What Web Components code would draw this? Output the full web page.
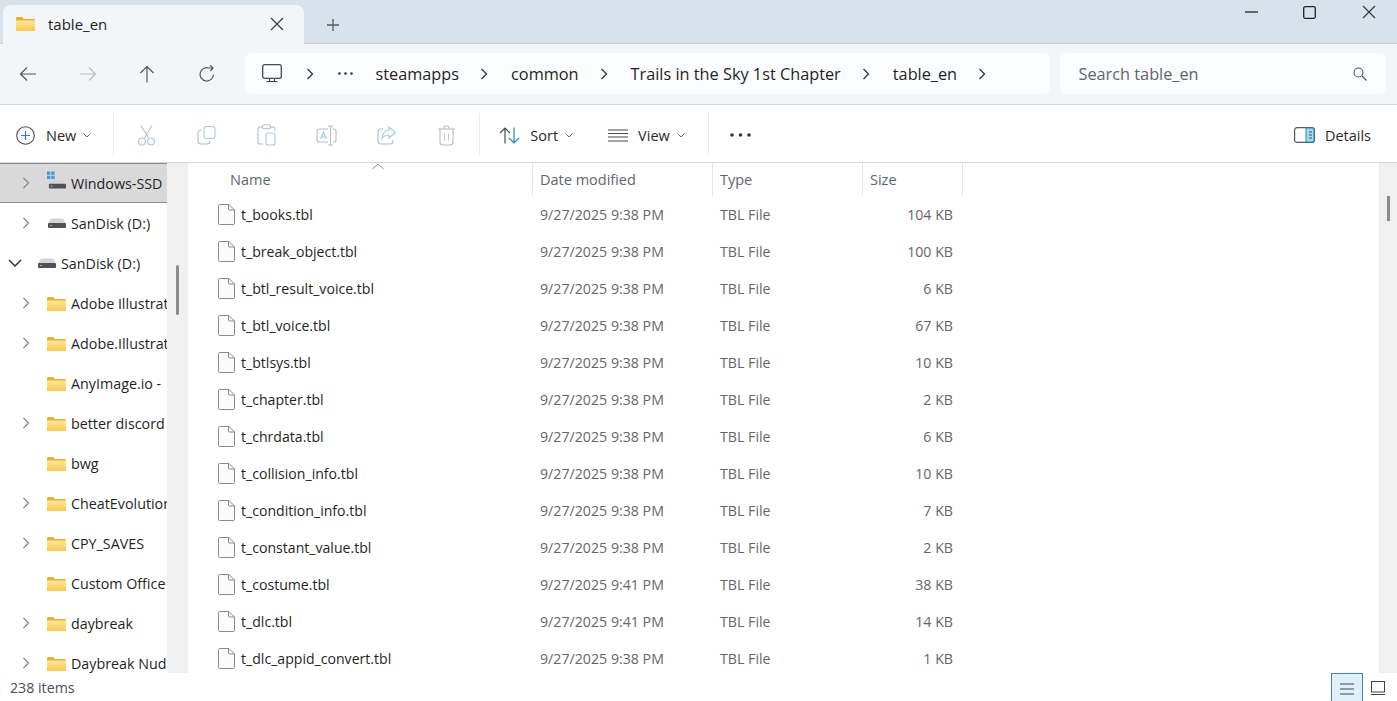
<!DOCTYPE html>
<html lang="en">
<head>
<meta charset="utf-8">
<title>table_en</title>
<style>
    html, body { margin: 0; height: 100%; overflow: hidden; background: #fff; }
    body { font-family: "Open Sans", "Noto Sans", "Liberation Sans", sans-serif; color: #1f1f1f; }
</style>
</head>
<body>
<x-explorer></x-explorer>

<script>
const ICONS = {
    folder: `<svg width="19" height="15" viewBox="0 0 19 15"><defs><linearGradient id="f" x1="0" y1="0" x2="0" y2="1"><stop offset="0" stop-color="#ffe99c"/><stop offset="1" stop-color="#f6c850"/></linearGradient></defs><path d="M0 2a1 1 0 0 1 1-1h5l2 2h10a1 1 0 0 1 1 1v10a1 1 0 0 1-1 1H1a1 1 0 0 1-1-1z" fill="#e8b02e"/><path d="M0 4.500h19V14a1 1 0 0 1-1 1H1a1 1 0 0 1-1-1z" fill="url(#f)"/></svg>`,
    drive: `<svg width="18" height="10" viewBox="0 0 18 10"><path d="M3 0.500h12l3 5H0z" fill="#d5d5d5"/><rect y="5" width="18" height="5" rx="1" fill="#4e5156"/><rect x="2" y="7" width="2" height="1" fill="#9bc46a"/></svg>`,
    osdrive: `<svg width="20" height="19" viewBox="0 0 20 19"><g fill="#3f9bd8"><rect x="0" y="0" width="3.500" height="3.500"/><rect x="4.500" y="0" width="3.500" height="3.500"/><rect x="0" y="4.500" width="3.500" height="3.500"/><rect x="4.500" y="4.500" width="3.500" height="3.500"/></g><path d="M4 9h12l3 5H2z" fill="#d5d5d5"/><rect x="2" y="13" width="18" height="5" rx="1" fill="#4e5156"/><rect x="4" y="15" width="2" height="1" fill="#9bc46a"/></svg>`,
    file: `<svg width="17" height="21" viewBox="0 0 17 21"><path d="M1.500.500h9.500l5.500 5.500v13.500a1 1 0 0 1-1 1h-14a1 1 0 0 1-1-1V1.500a1 1 0 0 1 1-1z" fill="#fbfbfb" stroke="#8a8a8a"/><path d="M10.500.500v4.500a1 1 0 0 0 1 1h5" fill="none" stroke="#8a8a8a"/></svg>`,
    chevR: `<svg width="8" height="12" viewBox="0 0 8 12"><path d="M1.500 1l5 5-5 5" fill="none" stroke="currentColor" stroke-width="1.300"/></svg>`,
    chevD: `<svg width="14" height="8" viewBox="0 0 14 8"><path d="M1 1l6 6 6-6" fill="none" stroke="currentColor" stroke-width="1.500"/></svg>`,
    chevSmall: `<svg width="8" height="5" viewBox="0 0 8 5"><path d="M.500.500l3.500 3.500 3.500-3.500" fill="none" stroke="#6a6a6a"/></svg>`,
    caret: `<svg width="12" height="7" viewBox="0 0 12 7"><path d="M.500 6l5.500-5 5.500 5" fill="none" stroke="#8c8c8c"/></svg>`,
    close: `<svg width="14" height="14" viewBox="0 0 14 14"><path d="M1 1l12 12M13 1L1 13" fill="none" stroke="#3a3a3a" stroke-width="1.200"/></svg>`,
    plus: `<svg width="14" height="14" viewBox="0 0 14 14"><path d="M7 1v12M1 7h12" fill="none" stroke="#5a5a5a" stroke-width="1.300"/></svg>`,
    min: `<svg width="13" height="2" viewBox="0 0 13 2"><path d="M0 1h13" stroke="#222" stroke-width="1.300"/></svg>`,
    max: `<svg width="13" height="13" viewBox="0 0 13 13"><rect x=".700" y=".700" width="11.600" height="11.600" rx="1.500" fill="none" stroke="#222" stroke-width="1.300"/></svg>`,
    back: `<svg width="18" height="16" viewBox="0 0 18 16"><path d="M17 8H1.500M8 1.500L1.500 8 8 14.500" fill="none" stroke="#555" stroke-width="1.200"/></svg>`,
    forward: `<svg width="18" height="16" viewBox="0 0 18 16"><path d="M1 8h15.500M10 1.500L16.500 8 10 14.500" fill="none" stroke="#b9bdc1" stroke-width="1.200"/></svg>`,
    up: `<svg width="16" height="18" viewBox="0 0 16 18"><path d="M8 17.500V1.500M1.500 8L8 1.500 14.500 8" fill="none" stroke="#555" stroke-width="1.200"/></svg>`,
    refresh: `<svg width="16" height="17" viewBox="0 0 16 17"><path d="M14.500 9.500A6.700 6.700 0 1 1 10 3H14M11 0.500L14 3l-2.500 3" fill="none" stroke="#555" stroke-width="1.200"/></svg>`,
    pc: `<svg width="20" height="19" viewBox="0 0 20 19"><rect x=".700" y=".700" width="18.600" height="13.600" rx="2" fill="none" stroke="#4a4a4a" stroke-width="1.300"/><path d="M7.500 14.500v2.500M12.500 14.500v2.500M4.500 17.500h11" fill="none" stroke="#4a4a4a" stroke-width="1.200"/></svg>`,
    search: `<svg width="14" height="14" viewBox="0 0 14 14"><circle cx="5.500" cy="5.500" r="4.500" fill="none" stroke="#555" stroke-width="1.100"/><path d="M9 9l4.500 4.500" stroke="#555" stroke-width="1.200"/></svg>`,
    new: `<svg width="19" height="19" viewBox="0 0 19 19"><circle cx="9.500" cy="9.500" r="8.800" fill="#fff" stroke="#4a4a4a" stroke-width="1.100"/><path d="M9.500 5v9M5 9.500h9" stroke="#2a86b0" stroke-width="1.200"/></svg>`,
    cut: `<svg width="19" height="21" viewBox="0 0 19 21"><path d="M4 .500l7.500 12.500M15 .500L7.500 13" fill="none" stroke="#b6bec4" stroke-width="1.100"/><circle cx="5" cy="16.500" r="3.500" fill="none" stroke="#a9cbdd" stroke-width="1.200"/><circle cx="14" cy="16.500" r="3.500" fill="none" stroke="#a9cbdd" stroke-width="1.200"/></svg>`,
    copy: `<svg width="19" height="19" viewBox="0 0 19 19"><rect x="7" y=".500" width="11" height="12" rx="2.500" fill="#fff" stroke="#a9cbdd" stroke-width="1.100"/><path d="M5 4H4a3 3 0 0 0-3 3v8a3 3 0 0 0 3 3h6a3 3 0 0 0 3-3" fill="none" stroke="#b6bec4" stroke-width="1.100"/></svg>`,
    paste: `<svg width="19" height="22" viewBox="0 0 19 22"><path d="M5 3H3a2 2 0 0 0-2 2v13a2 2 0 0 0 2 2h3M14 3h2a2 2 0 0 1 2 2v2" fill="none" stroke="#b6bec4" stroke-width="1.100"/><rect x="5.500" y=".700" width="8" height="4" rx="1.500" fill="#fff" stroke="#b6bec4" stroke-width="1.100"/><rect x="9" y="9" width="9" height="12" rx="2" fill="#fff" stroke="#a9cbdd" stroke-width="1.100"/></svg>`,
    rename: `<svg width="21" height="21" viewBox="0 0 21 21"><path d="M12 4H3a2 2 0 0 0-2 2v9a2 2 0 0 0 2 2h9M17 4h1a2 2 0 0 1 2 2v9a2 2 0 0 1-2 2h-1" fill="none" stroke="#b6bec4" stroke-width="1.100"/><path d="M4.500 14L7.500 7l3 7M5.500 12h4" fill="none" stroke="#a9cbdd" stroke-width="1.100"/><path d="M12 1h5M12 20h5M14.500 1v19" fill="none" stroke="#b6bec4" stroke-width="1.100"/></svg>`,
    share: `<svg width="19" height="19" viewBox="0 0 19 19"><path d="M6 3H4a3 3 0 0 0-3 3v9a3 3 0 0 0 3 3h9a3 3 0 0 0 3-3v-1" fill="none" stroke="#b6bec4" stroke-width="1.100"/><path d="M12 1l6.500 5.500L12 12V9c-3 0-5 1-7 3.500C5.500 8 8 4.500 12 4z" fill="#fff" stroke="#a9cbdd" stroke-width="1.100"/></svg>`,
    trash: `<svg width="19" height="21" viewBox="0 0 19 21"><path d="M1 4h17M7 4V3a2 2 0 0 1 2-2h1a2 2 0 0 1 2 2v1M3 4v13a3 3 0 0 0 3 3h7a3 3 0 0 0 3-3V4" fill="none" stroke="#b6bec4" stroke-width="1.100"/><path d="M7.500 8.500v7M11.500 8.500v7" stroke="#c4cbd0" stroke-width="1.100"/></svg>`,
    sort: `<svg width="21" height="17" viewBox="0 0 21 17"><path d="M6 16.500V1M1 6l5-5 5 5" fill="none" stroke="#4a4a4a" stroke-width="1.200"/><path d="M15 .500V16M10 11l5 5 5-5" fill="none" stroke="#2a86b0" stroke-width="1.200"/></svg>`,
    view: `<svg width="20" height="13" viewBox="0 0 20 13"><path d="M0 1h20M0 4.500h20M0 8h20M0 12h20" stroke="#4a4a4a" stroke-width="1.100"/></svg>`,
    dots: `<svg width="21" height="4" viewBox="0 0 21 4"><circle cx="2" cy="2" r="1.800" fill="#333"/><circle cx="10.500" cy="2" r="1.800" fill="#333"/><circle cx="19" cy="2" r="1.800" fill="#333"/></svg>`,
    dotsSmall: `<svg width="15" height="3" viewBox="0 0 15 3"><circle cx="1.500" cy="1.500" r="1.300" fill="#333"/><circle cx="7.500" cy="1.500" r="1.300" fill="#333"/><circle cx="13.500" cy="1.500" r="1.300" fill="#333"/></svg>`,
    details: `<svg width="21" height="16" viewBox="0 0 21 16"><rect x=".600" y=".600" width="19.800" height="14.800" rx="2.500" fill="#fff" stroke="#4f5a63" stroke-width="1.200"/><path d="M12 1h6a2 2 0 0 1 2 2v10a2 2 0 0 1-2 2h-6z" fill="#a9d8ec" stroke="#2a86b0"/><path d="M15 5h3M15 8h3M15 11h3" stroke="#1f5f80"/></svg>`,
    listview: `<svg width="14" height="12" viewBox="0 0 14 12"><path d="M0 1h14M0 6h14M0 11h14" stroke="#444" stroke-width="1.100"/></svg>`,
    tileview: `<svg width="14" height="14" viewBox="0 0 14 14"><rect x=".500" y=".500" width="13" height="10.500" fill="#fff" stroke="#444"/><path d="M0 13.500h14" stroke="#444"/></svg>`
};

class XIcon extends HTMLElement {
    connectedCallback() {
        if (this.shadowRoot) return;
        this.attachShadow({mode: 'open'});
        this.shadowRoot.innerHTML = `
            <style>
                :host { display: inline-flex; align-items: center; justify-content: center; flex: none; }
                svg { display: block; }
            </style>
            ${ICONS[this.getAttribute('name')] || ''}
        `;
    }
}
customElements.define('x-icon', XIcon);

class TabStrip extends HTMLElement {
    constructor() {
        super();
        this.attachShadow({mode: 'open'});
        this.shadowRoot.innerHTML = `
            <style>
                :host {
                    display: flex;
                    height: 44px;
                    flex: none;
                    align-items: flex-end;
                    padding-left: 3px;
                    background: #d8e2ea;
                    box-shadow: inset 0 -1px 0 #c6d0d8;
                    font-size: 15px;
                }
                .tab {
                    width: 301px;
                    height: 39px;
                    box-sizing: border-box;
                    padding: 0 20px 2px 13px;
                    display: flex;
                    align-items: center;
                    background: #f3f6f8;
                    border-radius: 8px 8px 0 0;
                }
                .title { margin-left: 13px; flex: 1; }
                .plus { margin: 0 0 5px 22px; align-self: flex-end; height: 28px; }
                .controls { margin-left: auto; align-self: flex-start; display: flex; height: 24px; align-items: center; padding-right: 21px; }
                .controls .max { margin: 0 46px 0 45px; }
            </style>
            <div class="tab">
                <x-icon name="folder"></x-icon>
                <span class="title">table_en</span>
                <x-icon name="close"></x-icon>
            </div>
            <x-icon class="plus" name="plus"></x-icon>
            <div class="controls">
                <x-icon name="min"></x-icon>
                <x-icon class="max" name="max"></x-icon>
                <x-icon name="close"></x-icon>
            </div>
        `;
    }
}
customElements.define('x-tabstrip', TabStrip);

class NavBar extends HTMLElement {
    constructor() {
        super();
        this.attachShadow({mode: 'open'});
        const crumbs = ['steamapps', 'common', 'Trails in the Sky 1st Chapter', 'table_en'];
        this.shadowRoot.innerHTML = `
            <style>
                :host {
                    display: flex;
                    flex: none;
                    height: 61px;
                    box-sizing: border-box;
                    align-items: center;
                    padding: 0 11px 1px 18px;
                    background: #f2f6f8;
                    border-bottom: 1px solid #d0d6db;
                    font-size: 16.300px;
                }
                .nav { display: flex; gap: 39.500px; align-items: center; margin-right: 28px; }
                .nav x-icon { width: 20px; }
                .address, .search { height: 41px; display: flex; align-items: center; box-sizing: border-box; border-radius: 6px; }
                .address { width: 805px; background: #fbfcfd; padding-left: 17px; }
                .search { width: 326px; margin-left: 10px; background: #fafcfd; padding: 0 19px; justify-content: space-between; color: #606468; }
                .pc { margin-right: 24px; }
                .sep { color: #333; margin: 0 23px 0 21px; }
                .sep.first { margin: 0 24px 0 0; }
                .dots { margin-right: 23px; }
            </style>
            <div class="nav">
                <x-icon name="back"></x-icon>
                <x-icon name="forward"></x-icon>
                <x-icon name="up"></x-icon>
                <x-icon name="refresh"></x-icon>
            </div>
            <div class="address">
                <x-icon class="pc" name="pc"></x-icon>
                <x-icon class="sep first" name="chevR"></x-icon>
                <x-icon class="dots" name="dotsSmall"></x-icon>
                ${crumbs.map(c => `<span>${c}</span><x-icon class="sep" name="chevR"></x-icon>`).join('')}
            </div>
            <div class="search">
                <span>Search table_en</span>
                <x-icon name="search"></x-icon>
            </div>
        `;
    }
}
customElements.define('x-navbar', NavBar);

class ToolBar extends HTMLElement {
    constructor() {
        super();
        this.attachShadow({mode: 'open'});
        const disabled = ['cut', 'copy', 'paste', 'rename', 'share', 'trash'];
        this.shadowRoot.innerHTML = `
            <style>
                :host {
                    display: flex;
                    flex: none;
                    height: 58px;
                    box-sizing: border-box;
                    align-items: center;
                    padding: 3px 26px 0 16px;
                    background: #fff;
                    border-bottom: 1px solid #d4d8dc;
                    font-size: 14.500px;
                    color: #2a2a2a;
                }
                .btn { display: flex; align-items: center; }
                .btn span { margin: 0 7px 0 11px; }
                .sep { width: 1px; height: 42px; margin-top: -3px; background: #e8eaec; flex: none; }
                .ghost { display: flex; width: 360px; margin: 0 3px 0 2px; }
                .ghost x-icon { width: 60px; }
                .more { margin-left: 21px; }
                .details { margin-left: auto; }
                .details span { margin: 0 0 0 10px; }
            </style>
            <div class="btn"><x-icon name="new"></x-icon><span>New</span><x-icon name="chevSmall"></x-icon></div>
            <div class="sep" style="margin-left:22px"></div>
            <div class="ghost">${disabled.map(n => `<x-icon name="${n}"></x-icon>`).join('')}</div>
            <div class="sep"></div>
            <div class="btn" style="margin-left:19px"><x-icon name="sort"></x-icon><span style="margin-left:10px">Sort</span><x-icon name="chevSmall"></x-icon></div>
            <div class="btn" style="margin-left:35px"><x-icon name="view"></x-icon><span style="margin-left:10px">View</span><x-icon name="chevSmall"></x-icon></div>
            <div class="sep" style="margin-left:23px"></div>
            <x-icon class="more" name="dots"></x-icon>
            <div class="btn details"><x-icon name="details"></x-icon><span>Details</span></div>
        `;
    }
}
customElements.define('x-toolbar', ToolBar);

class TreeRow extends HTMLElement {
    constructor() {
        super();
        this.attachShadow({mode: 'open'});
        const icon = this.getAttribute('icon') || 'folder';
        const open = this.hasAttribute('open');
        const leaf = this.hasAttribute('leaf');
        this.shadowRoot.innerHTML = `
            <style>
                :host {
                    display: flex;
                    height: 40px;
                    flex: none;
                    box-sizing: border-box;
                    align-items: center;
                    padding-left: 22px;
                    white-space: nowrap;
                    overflow: hidden;
                    font-size: 14.300px;
                }
                :host([open]) { padding-left: 8px; }
                :host([selected]) {
                    background: #d9d9d9;
                    border-top: 1px solid #8a8a8a;
                    border-bottom: 1px solid #8a8a8a;
                }
                .chev { display: block; flex: none; width: 8px; margin-right: 17px; color: #8a8a8a; }
                :host([open]) .chev { width: 14px; margin-right: 15px; color: #333; }
                .ico { width: 19px; margin-right: 5px; }
                :host([icon="osdrive"]) .ico { margin-top: -5px; }
            </style>
            ${leaf ? '<span class="chev"></span>' : `<x-icon class="chev" name="${open ? 'chevD' : 'chevR'}"></x-icon>`}
            <x-icon class="ico" name="${icon}"></x-icon>
            <span><slot></slot></span>
        `;
    }
}
customElements.define('x-tree-row', TreeRow);

class SideBar extends HTMLElement {
    constructor() {
        super();
        this.attachShadow({mode: 'open'});
        this.shadowRoot.innerHTML = `
            <style>
                :host { display: flex; flex: none; width: 188px; overflow: hidden; }
                .list { width: 167px; display: flex; flex-direction: column; overflow: hidden; }
                .track { width: 21px; background: #f0f0f0; position: relative; }
                .thumb { position: absolute; left: 9px; top: 102px; width: 3px; height: 50px; background: #8b8b8b; border-radius: 2px; }
            </style>
            <div class="list"><slot></slot></div>
            <div class="track"><div class="thumb"></div></div>
        `;
    }
}
customElements.define('x-sidebar', SideBar);

class FileRow extends HTMLElement {
    constructor() {
        super();
        this.attachShadow({mode: 'open'});
        this.shadowRoot.innerHTML = `
            <style>
                :host {
                    display: grid;
                    grid-template-columns: 344px 180px 150px 91px;
                    height: 37px;
                    flex: none;
                    align-items: center;
                    font-size: 14.100px;
                    white-space: nowrap;
                }
                .name { display: flex; align-items: center; padding-left: 30px; }
                .name span { margin-left: 6px; }
                .meta { padding-left: 8px; color: #666; font-size: 14.200px; }
                .size { text-align: right; color: #666; font-size: 14.200px; }
            </style>
            <div class="name"><x-icon name="file"></x-icon><span>${this.getAttribute('name')}</span></div>
            <div class="meta">${this.getAttribute('date')}</div>
            <div class="meta">TBL File</div>
            <div class="size">${this.getAttribute('size')}</div>
        `;
    }
}
customElements.define('x-file-row', FileRow);

class FileList extends HTMLElement {
    constructor() {
        super();
        this.attachShadow({mode: 'open'});
        this.shadowRoot.innerHTML = `
            <style>
                :host { display: flex; flex: 1; min-width: 0; overflow: hidden; }
                .pane { flex: 1; display: flex; flex-direction: column; overflow: hidden; }
                .head {
                    display: grid;
                    grid-template-columns: 345px 180px 150px 100px;
                    height: 33px;
                    flex: none;
                    font-size: 14.500px;
                    color: #5c6670;
                    position: relative;
                }
                .head div { display: flex; align-items: center; padding-left: 7px; box-sizing: border-box; border-right: 1px solid #e6e6e6; }
                .head div:first-child { padding-left: 42px; }
                .caret { position: absolute; left: 184px; top: 0; }
                .track { width: 18px; flex: none; background: #f0f0f0; border-left: 1px solid #e8e8e8; box-sizing: border-box; position: relative; }
                .thumb { position: absolute; left: 7px; top: 33px; width: 3px; height: 25px; background: #8b8b8b; }
            </style>
            <div class="pane">
                <div class="head">
                    <div>Name</div><div>Date modified</div><div>Type</div><div>Size</div>
                    <x-icon class="caret" name="caret"></x-icon>
                </div>
                <slot></slot>
            </div>
            <div class="track"><div class="thumb"></div></div>
        `;
    }
}
customElements.define('x-filelist', FileList);

class StatusBar extends HTMLElement {
    constructor() {
        super();
        this.attachShadow({mode: 'open'});
        this.shadowRoot.innerHTML = `
            <style>
                :host {
                    display: flex;
                    flex: none;
                    height: 28px;
                    align-items: center;
                    padding: 0 12px 0 10px;
                    font-size: 14.200px;
                    color: #4a4f54;
                    background: #fff;
                }
                .list {
                    margin-left: auto;
                    width: 32px;
                    height: 28px;
                    box-sizing: border-box;
                    display: flex;
                    align-items: center;
                    justify-content: center;
                    background: #e0f0f8;
                    border: 1px solid #3f8a9e;
                    border-bottom: 0;
                    padding-top: 3px;
                }
                .tile { width: 22px; display: flex; justify-content: flex-end; padding-top: 2px; }
            </style>
            <span>238 items</span>
            <div class="list"><x-icon name="listview"></x-icon></div>
            <div class="tile"><x-icon name="tileview"></x-icon></div>
        `;
    }
}
customElements.define('x-statusbar', StatusBar);

class Explorer extends HTMLElement {
    constructor() {
        super();
        this.attachShadow({mode: 'open'});
        const tree = [
            ['Windows-SSD', 'icon="osdrive" selected'],
            ['SanDisk (D:)', 'icon="drive"'],
            ['SanDisk (D:)', 'icon="drive" open'],
            ['Adobe Illustrat', ''],
            ['Adobe.Illustrat', ''],
            ['AnyImage.io -', 'leaf'],
            ['better discord', ''],
            ['bwg', 'leaf'],
            ['CheatEvolution', ''],
            ['CPY_SAVES', ''],
            ['Custom Office', 'leaf'],
            ['daybreak', ''],
            ['Daybreak Nud', '']
        ];
        const files = [
            ['t_books.tbl', '9/27/2025 9:38 PM', '104 KB'],
            ['t_break_object.tbl', '9/27/2025 9:38 PM', '100 KB'],
            ['t_btl_result_voice.tbl', '9/27/2025 9:38 PM', '6 KB'],
            ['t_btl_voice.tbl', '9/27/2025 9:38 PM', '67 KB'],
            ['t_btlsys.tbl', '9/27/2025 9:38 PM', '10 KB'],
            ['t_chapter.tbl', '9/27/2025 9:38 PM', '2 KB'],
            ['t_chrdata.tbl', '9/27/2025 9:38 PM', '6 KB'],
            ['t_collision_info.tbl', '9/27/2025 9:38 PM', '10 KB'],
            ['t_condition_info.tbl', '9/27/2025 9:38 PM', '7 KB'],
            ['t_constant_value.tbl', '9/27/2025 9:38 PM', '2 KB'],
            ['t_costume.tbl', '9/27/2025 9:41 PM', '38 KB'],
            ['t_dlc.tbl', '9/27/2025 9:41 PM', '14 KB'],
            ['t_dlc_appid_convert.tbl', '9/27/2025 9:38 PM', '1 KB']
        ];
        this.shadowRoot.innerHTML = `
            <style>
                :host {
                    display: flex;
                    flex-direction: column;
                    width: 1397px;
                    height: 701px;
                    overflow: hidden;
                }
                .body { flex: 1; min-height: 0; display: flex; }
            </style>
            <x-tabstrip></x-tabstrip>
            <x-navbar></x-navbar>
            <x-toolbar></x-toolbar>
            <div class="body">
                <x-sidebar>
                    ${tree.map(t => `<x-tree-row ${t[1]}>${t[0]}</x-tree-row>`).join('')}
                </x-sidebar>
                <x-filelist>
                    ${files.map(f => `<x-file-row name="${f[0]}" date="${f[1]}" size="${f[2]}"></x-file-row>`).join('')}
                </x-filelist>
            </div>
            <x-statusbar></x-statusbar>
        `;
    }
}
customElements.define('x-explorer', Explorer);
</script>
</body>
</html>
